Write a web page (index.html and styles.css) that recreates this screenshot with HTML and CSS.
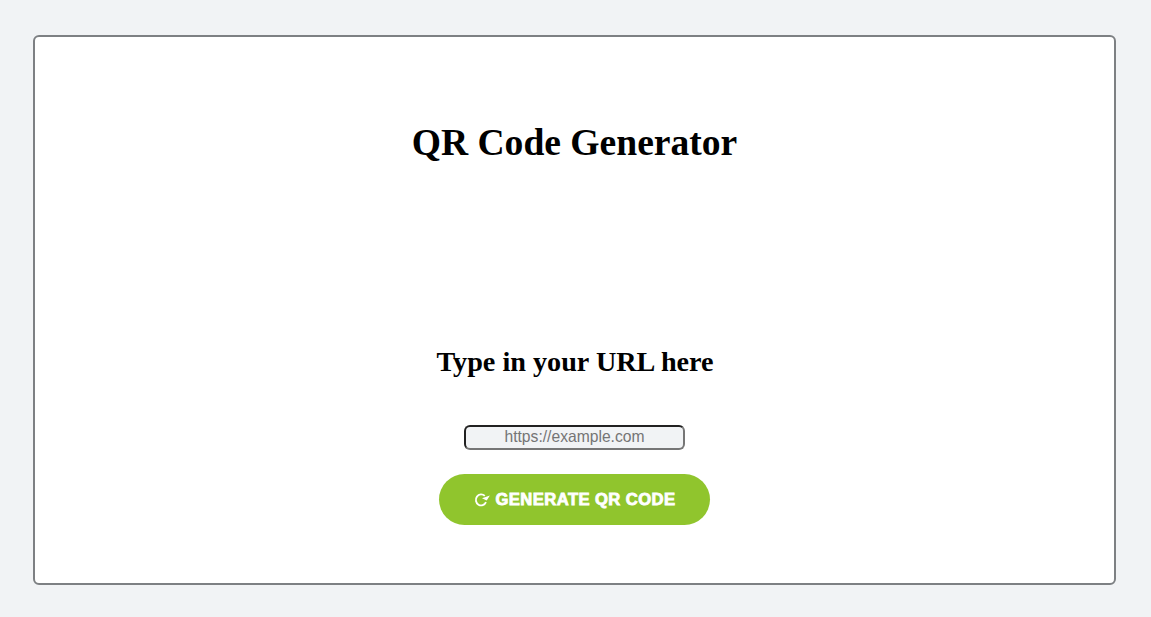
FILE: index.html
```
<!DOCTYPE html>
<html lang="en">
<head>
<meta charset="utf-8">
<title>QR Code Generator</title>
<link rel="stylesheet" href="styles.css">
</head>
<body>
<main class="card">
  <h1 class="title">QR Code Generator</h1>
  <h2 class="subtitle">Type in your URL here</h2>
  <input class="url" type="text" placeholder="https://example.com" aria-label="URL">
  <button class="generate" type="button">
    <svg class="icon" viewBox="0 0 16 16" aria-hidden="true"><path d="M12 10.2A5.3 5.5 0 1 1 10.8 3.9" fill="none" stroke="currentColor" stroke-width="1.8"/><path d="M8 6.3L15.9 3.4L12.7 8.6Z" fill="currentColor"/></svg>
    <span class="label">GENERATE QR CODE</span>
  </button>
</main>
</body>
</html>
```
FILE: styles.css
```
* { box-sizing: border-box; }
body {
  margin: 0;
  height: 617px;
  padding: 35px 35px 32px 33px;
  background: #f1f3f5;
  font-family: "Liberation Serif", "Times New Roman", serif;
}
.card {
  display: flex;
  flex-direction: column;
  align-items: center;
  height: 550px;
  padding-top: 84px;
  background: #fff;
  border: 2px solid #7d8083;
  border-radius: 6px;
}
.title { margin: 0; font-size: 37.6px; line-height: 44px; white-space: nowrap; }
.subtitle { margin: 180px 0 0; padding-left: 1px; font-size: 28.2px; line-height: 34px; white-space: nowrap; }
.url {
  width: 221px;
  height: 25px;
  margin-top: 46px;
  padding: 0 2px 1px;
  text-align: center;
  font: 15.67px "Liberation Sans", Arial, sans-serif;
  background: #f1f3f5;
  border: 2px inset #767676;
  border-radius: 6px;
}
.url::placeholder { color: #757575; }
.generate {
  display: flex;
  align-items: center;
  justify-content: center;
  gap: 5px;
  width: 271px;
  height: 51px;
  margin-top: 24px;
  padding: 0;
  color: #fff;
  background: #90c52d;
  border: 0;
  border-radius: 26px;
  font: 900 15.6px "Liberation Sans", Arial, sans-serif;
  white-space: nowrap;
}
.label {
  margin: 0 5px 0 6px;
  letter-spacing: 0.4px;
  -webkit-text-stroke: 0.8px currentColor;
  transform: scaleX(1.065);
}
.icon { width: 16px; height: 16px; }
```
